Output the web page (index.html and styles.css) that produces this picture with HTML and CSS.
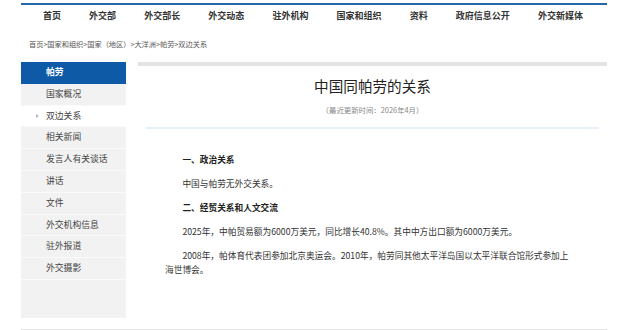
FILE: index.html
```html
<!DOCTYPE html>
<html lang="zh-CN">
<head>
<meta charset="utf-8">
<title>中国同帕劳的关系</title>
<link rel="stylesheet" href="styles.css">
</head>
<body>
<div class="page">
  <header class="topnav">
    <a>首页</a>
    <a>外交部</a>
    <a>外交部长</a>
    <a>外交动态</a>
    <a>驻外机构</a>
    <a>国家和组织</a>
    <a>资料</a>
    <a>政府信息公开</a>
    <a>外交新媒体</a>
  </header>
  <div class="crumbs">首页&gt;国家和组织&gt;国家（地区）&gt;大洋洲&gt;帕劳&gt;双边关系</div>
  <div class="main">
    <aside class="side">
      <div class="side-item active">帕劳</div>
      <div class="side-item">国家概况</div>
      <div class="side-item current"><span class="arrow"></span>双边关系</div>
      <div class="side-item">相关新闻</div>
      <div class="side-item">发言人有关谈话</div>
      <div class="side-item">讲话</div>
      <div class="side-item">文件</div>
      <div class="side-item">外交机构信息</div>
      <div class="side-item">驻外报道</div>
      <div class="side-item">外交摄影</div>
    </aside>
    <section class="content">
      <div class="topbar"></div>
      <h1 class="title">中国同帕劳的关系</h1>
      <div class="date">（最近更新时间：2026年4月）</div>
      <div class="rule"></div>
      <article class="article">
        <p class="head">一、政治关系</p>
        <p>中国与帕劳无外交关系。</p>
        <p class="head">二、经贸关系和人文交流</p>
        <p>2025年，中帕贸易额为6000万美元，同比增长40.8%。其中中方出口额为6000万美元。</p>
        <p>2008年，帕体育代表团参加北京奥运会。2010年，帕劳同其他太平洋岛国以太平洋联合馆形式参加上海世博会。</p>
      </article>
    </section>
  </div>
  <div class="footline"></div>
</div>
</body>
</html>
```

FILE: styles.css
```css
html, body {
  margin: 0;
  padding: 0;
  background: #fff;
}
body {
  font-family: "Noto Sans CJK SC", "Noto Sans", sans-serif;
  color: #333;
}
.page {
  width: 586px;
  margin: 0 0 0 21px;
  padding-top: 3px;
}
.topnav {
  border-top: 2px solid #2567a8;
  height: 22px;
  display: flex;
  justify-content: space-between;
  align-items: center;
  padding: 0 24px 0 22px;
  font-size: 9px;
  font-weight: bold;
  color: #333;
}
.topnav a {
  display: block;
  line-height: 12px;
}
.crumbs {
  margin-top: 11px;
  padding-left: 8px;
  font-size: 7.2px;
  line-height: 12px;
  color: #555;
}
.main {
  margin-top: 12px;
  display: flex;
  gap: 12px;
}
.side {
  width: 105px;
  height: 256px;
  background: #f2f2f2;
  flex: none;
}
.side-item {
  height: 20.8px;
  line-height: 20.8px;
  border-bottom: 1px solid #fafafa;
  padding-left: 25px;
  font-size: 8.8px;
  color: #444;
  position: relative;
}
.side-item.active {
  background: #0e5aa7;
  color: #fff;
  font-weight: bold;
  border-bottom-color: #0e5aa7;
}
.side-item.current {
  background: #fff;
}
.arrow {
  position: absolute;
  left: 15px;
  top: 8px;
  width: 0;
  height: 0;
  border-left: 3px solid #bbb;
  border-top: 2.5px solid transparent;
  border-bottom: 2.5px solid transparent;
}
.content {
  flex: 1;
}
.topbar {
  height: 4px;
  background: #e4e4e4;
}
.title {
  margin: 10px 0 0;
  text-align: center;
  font-size: 14.6px;
  line-height: 20px;
  font-weight: normal;
  color: #222;
}
.date {
  margin-top: 8px;
  text-align: center;
  font-size: 7.4px;
  line-height: 12px;
  color: #888;
}
.rule {
  margin: 11px 8px 0;
  height: 2px;
  background: #e6f0fa;
}
.article {
  padding: 24px 31px 0 27px;
}
.article p {
  margin: 0 0 10px;
  font-size: 8.7px;
  line-height: 14px;
  text-indent: 2em;
  color: #333;
}
.article p.head {
  font-weight: bold;
  color: #222;
}
.footline {
  margin-top: 11px;
  height: 1px;
  background: #e6e6e6;
}
```
